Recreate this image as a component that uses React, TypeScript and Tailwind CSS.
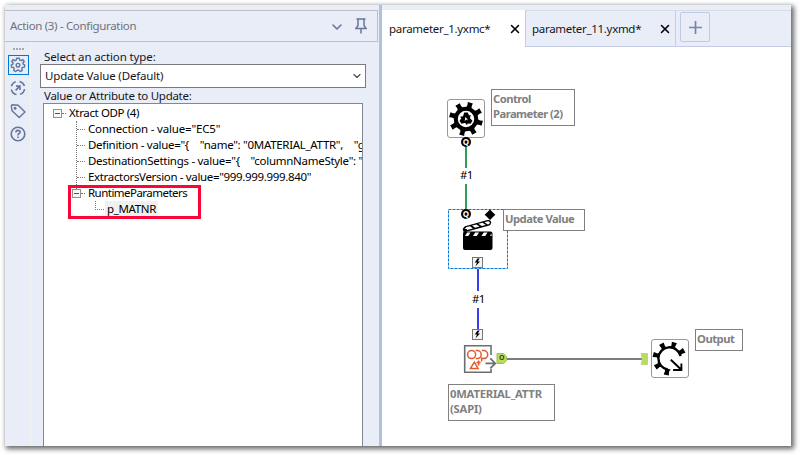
import React from "react";
import { X, ChevronDown } from "lucide-react";

const teeth = [-75, -30, 15, 60, 105, 150, 195, 240];

function ControlGear() {
  return (
    <svg viewBox="0 0 38 39" className="block h-[39px] w-[38px]">
      <rect x="0.5" y="0.5" width="37" height="38" rx="2.5" fill="#fff" stroke="#999" />
      <g transform="translate(19 20)">
        <circle r="10.2" fill="none" stroke="#000" strokeWidth="4" />
        {teeth.map((a) => (
          <path key={a} d="M10 -3 L14 -2.2 L16.8 -2.6 V2.6 L14 2.2 L10 3Z" transform={`rotate(${a})`} />
        ))}
        {[0, 120, 240].map((a) => (
          <path key={a} d="M-3.4 -1.2 L-1.8 -6.4 H1.8 L3 -3.6 L5 -4 L3 0.8 L-0.8 -1.6 L0.8 -2.4Z" transform={`rotate(${a})`} />
        ))}
      </g>
    </svg>
  );
}

function OutputGear() {
  return (
    <svg viewBox="0 0 38 39" className="block h-[39px] w-[38px]">
      <rect x="0.5" y="0.5" width="37" height="38" rx="2.5" fill="#fff" stroke="#999" />
      <g transform="translate(18.5 19.5)">
        <path d="M11 -2.5 A11.2 11.2 0 1 0 -1.5 11.1" fill="none" stroke="#000" strokeWidth="2.4" />
        {[-119, -73, -29, 194, 148, 101].map((a) => (
          <path key={a} d="M10.5 -3.4 L12.8 -2 L16.8 -2.6 V2.6 L12.8 2 L10.5 3.4Z" transform={`rotate(${a})`} />
        ))}
        <path d="M1.3 1.2 L11.6 11 M11.9 5 V11.5 H3.6" fill="none" stroke="#000" strokeWidth="1.9" />
      </g>
    </svg>
  );
}

function Clapper() {
  return (
    <svg viewBox="0 0 34 34" className="block h-[34px] w-[34px]">
      <rect x="2" y="12.5" width="29.5" height="18.5" rx="2" />
      <path d="M4 17 L6.2 13.4 H9.5 L7.3 17Z M12 17 L14.2 13.4 H18 L15.8 17Z M20.5 17 L22.7 13.4 H26.5 L24.3 17Z M29 17 L30.5 14.2 V17Z" fill="#fff" />
      <path d="M3 13 Q1.6 12.5 1.8 9.5 L4 7.2 L26.5 1 Q30 0.5 30.2 3.5 Q30 6 27.5 6.8 L7 12.2Z" />
      <path d="M3.5 10 L5.5 8.1 L9 7.2 L12 9.4 L6 11Z M11 6.6 L15.4 5.4 L18.5 7.6 L14.2 8.8Z M17.4 4.8 L21.5 3.7 L24.8 5.9 L20.7 7Z M23.4 3.2 L27 2.2 Q28.8 2.3 28.9 3.8 Q28.5 5.3 26.8 5.4Z" fill="#fff" />
      <circle cx="4.7" cy="11.2" r="1.5" />
    </svg>
  );
}

function Bolt() {
  return (
    <svg viewBox="0 0 11 11" className="block h-[11px] w-[11px]">
      <rect x="0.5" y="0.5" width="10" height="10" fill="#f5f5f5" stroke="#777" />
      <path d="M5.5 1.5 L2.8 5.4 L5 5.5 L3.4 9.5 L8 4.6 L5.8 4.4 L7.6 1.5Z" />
    </svg>
  );
}

function QAnchor() {
  return (
    <div className="flex h-[10px] w-[10px] items-center justify-center rounded-full bg-black pb-px text-[8px] leading-none font-bold text-white">
      Q
    </div>
  );
}

function OdpIcon() {
  return (
    <svg viewBox="0 0 34 30" className="block h-[30px] w-[34px]" fill="none">
      <path d="M28 11 V1.7 H1.7 V28.2 H28 V25" stroke="#6d6e71" strokeWidth="1.6" />
      <g stroke="#e2592b" strokeWidth="1.5">
        <circle cx="8.6" cy="10.6" r="4" />
        <path d="M12.6 6.6 H14.2 A4 4 0 0 1 14.2 14.6 H12.6 M18.8 6.6 H20.4 A4 4 0 0 1 21 14.6 L18.6 14.2 V17.5" />
        <path d="M7.5 24.4 L11.3 18.2 L15 24.4Z M13.4 18.5 H17.6 M15.6 16.5 V21.5" />
      </g>
      <path d="M22.5 19.4 H32 M27.3 14.4 L32.3 19.4 L27.3 24.4" stroke="#6d6e71" strokeWidth="1.7" />
    </svg>
  );
}

function Sidebar() {
  return (
    <div className="flex w-[26px] shrink-0 flex-col items-center border-r border-[#f3f3f4] pt-[6px] pl-px text-[#65759b]">
      <div className="flex h-[3px] gap-px">
        <i className="h-[2px] w-[2px] bg-[#aaa]" />
        <i className="h-[2px] w-[2px] bg-[#aaa]" />
        <i className="h-[2px] w-[2px] bg-[#aaa]" />
        <i className="h-[2px] w-[2px] bg-[#aaa]" />
      </div>
      <div className="mt-[4px] flex h-5 w-[21px] items-center justify-center border border-[#0078d7] bg-[#e4effb]">
        <svg viewBox="0 0 16 16" className="h-4 w-4 shrink-0" fill="none" stroke="currentColor" strokeWidth="1.4">
          <path strokeLinejoin="round" d="M6.7 1.2 H9.3 L9.8 3.1 L11.2 3.7 L12.9 2.7 L14.2 4.5 L12.9 6 L13.1 7.1 L14.8 8 L14.3 10.2 L12.4 10.4 L11.7 11.6 L12.3 13.4 L10.3 14.6 L8.8 13.2 H7.2 L5.7 14.6 L3.7 13.4 L4.2 11.6 L3.5 10.4 L1.6 10.2 L1.2 8 L2.9 7.1 L3.1 6 L1.8 4.5 L3.1 2.7 L4.8 3.7 L6.2 3.1Z" />
          <circle cx="8" cy="8.2" r="1.8" />
        </svg>
      </div>
      <svg viewBox="0 0 16 16" className="mt-[5px] h-4 w-4" fill="none" stroke="currentColor" strokeWidth="1.5">
        <path d="M1.4 6.2 A6.8 6.8 0 0 1 5.8 1.6 M9.5 1.4 A6.8 6.8 0 0 1 14.5 6 M14.6 9.2 A6.8 6.8 0 0 1 10 14.4 M6.5 14.6 A6.8 6.8 0 0 1 1.4 9.5" />
        <path d="M5.6 10.4 L9.6 6.4 M6 6.1 H10 V10" strokeWidth="1.6" />
      </svg>
      <svg viewBox="0 0 16 16" className="mt-[7px] h-4 w-4" fill="none" stroke="currentColor" strokeWidth="1.4">
        <path strokeLinejoin="round" d="M1.3 2.5 L2.2 1.7 L8.2 2.2 L15 9 L9.2 14.5 L2 7.7Z" />
        <circle cx="5.1" cy="5.2" r="0.8" fill="currentColor" />
      </svg>
      <svg viewBox="0 0 16 16" className="mt-[7px] h-4 w-4" fill="none" stroke="currentColor" strokeWidth="1.6">
        <circle cx="8" cy="8" r="6.8" />
        <path d="M5.8 6.3 Q6 4.4 8 4.4 Q10.2 4.5 10.1 6.2 Q10 7.2 8.8 7.8 Q8 8.2 8 9.5" />
        <path d="M8 10.6 V12.1" />
      </svg>
    </div>
  );
}

function Row({ label, cls }: { label: string; cls: string }) {
  return (
    <div className="flex h-4 items-center pl-[33px]">
      <span className="mr-[3px] w-2 shrink-0 border-t border-dotted border-[#777]" />
      <span className={"whitespace-pre " + cls}>{label}</span>
    </div>
  );
}

function Expander() {
  return (
    <span className="flex h-[9px] w-[9px] shrink-0 items-center justify-center border border-[#919191] bg-[#f8f8f8]">
      <i className="h-px w-[5px] bg-[#3b53a4]" />
    </span>
  );
}

function ConfigPanel() {
  return (
    <div className="flex w-[374px] shrink-0 flex-col bg-[#e9edf8] pt-[5px]">
      <div className="flex h-8 w-[373px] shrink-0 items-center border border-l-0 border-[#c0c0c0] pl-[5px] text-[#6f7277]">
        <span className="text-[11.5px] tracking-[-0.33px] whitespace-pre">Action (3) - Configuration</span>
        <ChevronDown className="mt-px ml-auto h-4 w-4 text-[#65759b]" strokeWidth={2.4} />
        <svg viewBox="0 0 12 16" className="mr-2.5 ml-[10px] h-4 w-3" fill="none" stroke="#65759b" strokeWidth="1.5">
          <path d="M1.5 1 H10.5 M3 1 V7.5 L0.9 10.6 H11.1 L9 7.5 V1 M6 11 V15.6" />
        </svg>
      </div>
      <div className="flex min-h-0 flex-1">
        <Sidebar />
        <div className="flex min-w-0 flex-1 flex-col pt-[5px] text-[11.5px] text-[#16161c]">
          <div className="h-[17px] pl-[13px] leading-[19px] tracking-[-0.12px]">Select an action type:</div>
          <div className="ml-[9px] flex h-6 w-[326px] shrink-0 items-center justify-between border border-[#7a7a7a] bg-white pr-[2px] pl-1 tracking-[-0.15px]">
            <span>Update Value (Default)</span>
            <ChevronDown className="h-3 w-3 text-[#444]" strokeWidth={2.2} />
          </div>
          <div className="h-[15px] pl-[13px] leading-[15px] tracking-[-0.27px]">Value or Attribute to Update:</div>
          <div className="ml-3 w-[320px] flex-1 overflow-hidden border border-b-0 border-[#828790] bg-white pt-px text-[11.5px] leading-4 text-black">
            <div className="flex h-4 items-center pl-[9px]">
              <Expander />
              <span className="mr-[3px] w-[4px] border-t border-dotted border-[#777]" />
              <span className="tracking-[-0.37px]">Xtract ODP (4)</span>
            </div>
            <div className="relative">
              <span className="absolute top-0 left-8 h-[68px] border-l border-dotted border-[#777]" />
              <Row label={'Connection - value="EC5"'} cls="tracking-[-0.17px]" />
              <Row label={'Definition - value="{    "name": "0MATERIAL_ATTR",    "g'} cls="tracking-[-0.3px]" />
              <Row label={'DestinationSettings - value="{    "columnNameStyle": "'} cls="tracking-[-0.28px]" />
              <Row label={'ExtractorsVersion - value="999.999.999.840"'} cls="tracking-[-0.34px]" />
              <div className="relative z-10 flex h-4 items-center pl-7">
                <Expander />
                <span className="mr-[3px] w-[4px] border-t border-dotted border-[#777]" />
                <span className="tracking-[-0.53px]">RuntimeParameters</span>
              </div>
              <div className="flex h-4 pl-[51px]">
                <span className="h-[9px] w-[9px] shrink-0 border-b border-l border-dotted border-[#777]" />
                <span className="ml-px h-4 w-[53px] bg-[#f0f0f0] pl-0.5 tracking-[-0.35px]">p_MATNR</span>
              </div>
              <div className="absolute top-[64px] left-[24px] h-[34px] w-[133px] border-[3px] border-[#fb0538]" />
            </div>
          </div>
        </div>
      </div>
    </div>
  );
}

const label =
  "absolute whitespace-pre border border-[#808080] bg-white font-bold text-[#808080] text-[11.25px] leading-[15px] pl-px pt-px";

function Canvas() {
  return (
    <div className="relative flex-1 overflow-hidden bg-white">
      <svg viewBox="0 0 409 400" className="absolute top-0 left-0 h-[400px] w-[409px]" fill="none">
        <g strokeWidth="2">
          <path d="M84 98 V121 M84 137 V163" stroke="#2fa157" />
          <path d="M96 222 V244 M96 261 V283" stroke="#3d3df0" />
          <path d="M125 312 H260" stroke="#7d7d7d" />
        </g>
        <rect x="66.5" y="162.5" width="59" height="59" stroke="#0078d7" strokeDasharray="3 1" />
        <path d="M108 162.5 L113.3 167.7 L108 172.9 L102.7 167.7Z" fill="#000" />
        <path d="M115 306.5 H121.5 L124.5 309.5 V313.5 L121.5 316.5 H115Z" fill="#b9dc5c" stroke="#9bbb54" />
        <path d="M259 306.5 H265.5 V317.5 H259 L260.5 312Z" fill="#b9dc5c" stroke="#b9d98a" />
      </svg>
      <div className="absolute top-[52px] left-[65px]"><ControlGear /></div>
      <div className="absolute top-[90px] left-[79px]"><QAnchor /></div>
      <div className="absolute top-[120px] left-[78px] text-[11.5px] leading-4 tracking-[-0.6px]">#1</div>
      <div className="absolute top-[162px] left-[79px]"><QAnchor /></div>
      <div className="absolute top-[172px] left-[79px]"><Clapper /></div>
      <div className="absolute top-[210px] left-[90px]"><Bolt /></div>
      <div className="absolute top-[244px] left-[90px] text-[11.5px] leading-4 tracking-[-0.6px]">#1</div>
      <div className="absolute top-[282px] left-[90px]"><Bolt /></div>
      <div className="absolute top-[297px] left-[81px]"><OdpIcon /></div>
      <div className="absolute top-[307px] left-[117px] text-[7px] leading-[8px] font-bold text-[#38461d]">O</div>
      <div className="absolute top-[292px] left-[269px]"><OutputGear /></div>
      <div className={label + " top-[42px] left-[109px] h-[37px] w-[84px] tracking-[-0.55px]"}>{"Control\nParameter (2)"}</div>
      <div className={label + " top-[162px] left-[121px] h-[22px] w-[82px] tracking-[-0.5px]"}>Update Value</div>
      <div className={label + " top-[337px] left-[66px] h-[37px] w-[107px] tracking-[-0.22px]"}>{"0MATERIAL_ATTR\n(SAPI)"}</div>
      <div className={label + " top-[282px] left-[313px] h-[22px] w-[48px] tracking-[-0.5px]"}>Output</div>
    </div>
  );
}

function Workspace() {
  return (
    <div className="flex min-w-0 flex-1 flex-col">
      <div className="flex h-[42px] shrink-0 bg-[#e9edf8] pt-[5px] text-[11.5px] text-[#16161c]">
        <div className="flex w-[143px] items-center bg-white pr-[3px] pl-[7px]">
          <span className="tracking-[-0.3px]">parameter_1.yxmc*</span>
          <X className="ml-auto h-3.5 w-3.5 text-black" strokeWidth={2.7} />
        </div>
        <div className="flex w-[151px] items-center border-t border-r border-b border-l border-[#c4cde4] border-t-[#d8dbe4] pr-[3px] pl-[6px]">
          <span className="tracking-[-0.3px]">parameter_11.yxmd*</span>
          <X className="ml-auto h-3.5 w-3.5 text-black" strokeWidth={2.7} />
        </div>
        <div className="flex flex-1 border-t border-b border-[#c4cde4] border-t-[#d8dbe4] pt-px pl-1">
          <div className="flex h-[30px] w-[30px] items-center justify-center rounded-[2px] border border-[#bfcae4]">
            <svg viewBox="0 0 13 13" className="h-[13px] w-[13px]"><path d="M6.5 0 V13 M0 6.5 H13" stroke="#7587a6" strokeWidth="1.7" /></svg>
          </div>
        </div>
      </div>
      <Canvas />
    </div>
  );
}

export default function App() {
  return (
    <div className="h-[455px] w-[800px] overflow-hidden bg-white pt-[5px] pl-[5px] font-['Noto_Sans','Open_Sans',sans-serif]">
      <div className="flex h-[441px] w-[786px] bg-white shadow-[2px_2px_5px_1px_rgba(0,0,0,0.6)]">
        <ConfigPanel />
        <div className="w-[3px] shrink-0 bg-[#b0c0e0]" />
        <Workspace />
      </div>
    </div>
  );
}
